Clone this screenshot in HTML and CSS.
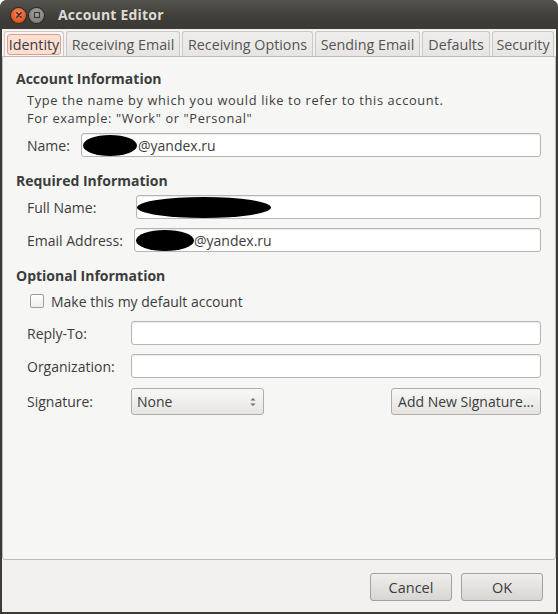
FILE: index.html
```html
<!DOCTYPE html>
<html>
<head>
<meta charset="utf-8">
<link rel="stylesheet" href="styles.css">
</head>
<body>
<div class="window">
  <div class="titlebar">
    <div class="wbtn close"><svg width="14" height="14" viewBox="0 0 14 14"><path d="M4.8 4.8 L9.2 9.2 M9.2 4.8 L4.8 9.2" stroke="#3a2a22" stroke-width="1.4" stroke-linecap="round"/></svg></div>
    <div class="wbtn mini"><svg width="14" height="14" viewBox="0 0 14 14"><rect x="4.5" y="4.5" width="5" height="5" fill="none" stroke="#3c3b37" stroke-width="1.2"/></svg></div>
    <div class="title">Account Editor</div>
  </div>
  <div class="client">
    <div class="tabs">
      <div class="tab active t1"><span>Identity</span></div>
      <div class="tab t2">Receiving Email</div>
      <div class="tab t3">Receiving Options</div>
      <div class="tab t4">Sending Email</div>
      <div class="tab t5">Defaults</div>
      <div class="tab t6">Security</div>
    </div>
    <div class="panel">
      <div class="heading h-acc">Account Information</div>
      <div class="desc">
        <div class="desc-line">Type the name by which you would like to refer to this account.</div>
        <div class="desc-line">For example: "Work" or "Personal"</div>
      </div>
      <div class="row r-name">
        <div class="label l-name">Name:</div>
        <div class="entry"><span class="blob b1"></span>@yandex.ru</div>
      </div>
      <div class="heading h-req">Required Information</div>
      <div class="row r-full">
        <div class="label l-full">Full Name:</div>
        <div class="entry e-full"><span class="blob b2"></span></div>
      </div>
      <div class="row r-email">
        <div class="label l-email">Email Address:</div>
        <div class="entry e-email"><span class="blob b3"></span>@yandex.ru</div>
      </div>
      <div class="heading h-opt">Optional Information</div>
      <div class="check-row">
        <span class="checkbox"></span><span>Make this my default account</span>
      </div>
      <div class="row r-reply">
        <div class="label l-std">Reply-To:</div>
        <div class="entry"></div>
      </div>
      <div class="row r-org">
        <div class="label l-std">Organization:</div>
        <div class="entry"></div>
      </div>
      <div class="row r-sig">
        <div class="label l-std">Signature:</div>
        <div class="select"><span>None</span><svg width="8" height="12" viewBox="0 0 8 12"><path d="M1.5 4.5 L4 2 L6.5 4.5 Z M1.5 7.5 L4 10 L6.5 7.5 Z" fill="#6a6a6a"/></svg></div>
        <div class="spacer"></div>
        <div class="button addsig">Add New Signature...</div>
      </div>
    </div>
    <div class="footer">
      <div class="button dlg">Cancel</div>
      <div class="button dlg">OK</div>
    </div>
  </div>
</div>
</body>
</html>
```
FILE: styles.css
```css
* { box-sizing: border-box; }
html, body { margin: 0; padding: 0; background: #ffffff; }
body {
  font-family: "Open Sans", "Liberation Sans", sans-serif;
  font-size: 14px;
  color: #3c3c3c;
}
.window {
  width: 558px;
  height: 614px;
  background: #3c3b37;
  border-radius: 7px 7px 0 0;
  display: flex;
  flex-direction: column;
  overflow: hidden;
}
.titlebar {
  height: 29px;
  flex: none;
  display: flex;
  align-items: center;
  background: linear-gradient(#55534d, #3f3e3a 60%, #3a3935);
  padding-left: 5px;
}
.wbtn {
  width: 15px;
  height: 15px;
  border-radius: 50%;
  display: flex;
  align-items: center;
  justify-content: center;
  margin-top: 1px;
}
.wbtn svg { display: block; }
.close {
  margin-left: 6px;
  background: radial-gradient(circle at 50% 35%, #f58a62, #e0531f 70%, #b8401a);
  box-shadow: 0 0 0 1px #2c2b28;
}
.mini {
  margin-left: 3px;
  background: radial-gradient(circle at 50% 35%, #a9a7a1, #7f7d78 75%, #62605b);
  box-shadow: 0 0 0 1px #2c2b28;
}
.title {
  margin-left: 14px;
  color: #dfdbd2;
  font-weight: bold;
  font-size: 14px;
  letter-spacing: 0.2px;
}
.client {
  flex: 1;
  margin: 0 2px 2px 2px;
  background: #f2f1f0;
  display: flex;
  flex-direction: column;
}
.tabs {
  height: 27px;
  flex: none;
  display: flex;
  align-items: flex-end;
  gap: 2px;
  padding-left: 2px;
}
.tab {
  height: 25px;
  border: 1px solid #cbc9c5;
  border-bottom: none;
  border-radius: 3px 3px 0 0;
  background: linear-gradient(#efeeec, #e6e5e2);
  color: #555555;
  font-size: 14.3px;
  display: flex;
  align-items: center;
  justify-content: center;
  white-space: nowrap;
}
.tab.active {
  background: #f6f6f5;
  border-color: #cbc9c5;
  padding: 2px 2px 2px 2px;
}
.tab.active span {
  display: flex;
  align-items: center;
  height: 21px;
  width: 100%;
  justify-content: center;
  background: #fbdfd3;
  border: 1px solid #e89c84;
  border-radius: 3px;
  color: #3c3c3c;
}
.t1 { width: 60px; }
.t2 { width: 114px; }
.t3 { width: 131px; }
.t4 { width: 105px; }
.t5 { width: 68px; }
.t6 { width: 62px; }
.panel {
  height: 504px;
  flex: none;
  background: #f6f6f5;
  border: 1px solid #bdbbb7;
  border-radius: 0 0 3px 3px;
  padding: 13px 14px 0 13px;
  display: flex;
  flex-direction: column;
}
.heading {
  font-weight: bold;
  font-size: 14px;
  line-height: 18px;
  height: 18px;
}
.h-req { margin-top: 15px; }
.h-opt { margin-top: 15px; }
.desc {
  margin-top: 4px;
  padding-left: 11px;
}
.desc-line {
  height: 17.5px;
  line-height: 17.5px;
  font-size: 12.8px;
  letter-spacing: 0.64px;
  white-space: nowrap;
}
.row {
  display: flex;
  align-items: center;
  padding-left: 11px;
}
.label {
  flex: none;
  font-size: 14px;
}
.l-name { width: 54px; }
.l-full { width: 109px; }
.l-email { width: 107px; }
.l-std { width: 104px; }
.entry {
  flex: 1;
  height: 24px;
  background: #ffffff;
  border: 1px solid #b5b4b0;
  border-radius: 3px;
  box-shadow: inset 0 1px 1px rgba(0,0,0,0.08);
  display: flex;
  align-items: center;
  padding-left: 1px;
  font-size: 14px;
}
.blob {
  display: inline-block;
  background: #000;
  border-radius: 50%;
  height: 21px;
}
.b1 { width: 54px; margin-right: 1px; }
.b2 { width: 134px; }
.b3 { width: 58px; margin-left: 0; }
.e-full { padding-left: 0; }
.e-email { padding-left: 1px; }
.r-name { margin-top: 6px; }
.r-full { margin-top: 5px; }
.r-email { margin-top: 9px; }
.check-row {
  margin-top: 7px;
  padding-left: 14px;
  height: 18px;
  display: flex;
  align-items: center;
  font-size: 14px;
}
.checkbox {
  width: 14px;
  height: 14px;
  border: 1px solid #9f9e9a;
  border-radius: 2px;
  background: linear-gradient(#ffffff, #eeeeec);
  margin-right: 7px;
}
.r-reply { margin-top: 11px; }
.r-org { margin-top: 9px; }
.r-sig { margin-top: 10px; }
.select {
  width: 133px;
  height: 27px;
  border: 1px solid #aeada9;
  border-radius: 3px;
  background: linear-gradient(#f8f8f7, #e6e5e2);
  display: flex;
  align-items: center;
  justify-content: space-between;
  padding: 0 6px 0 5px;
  font-size: 14px;
}
.select svg { display: block; }
.spacer { flex: 1; }
.button {
  height: 27px;
  border: 1px solid #aeada9;
  border-radius: 3px;
  background: linear-gradient(#f8f8f7, #e4e3e0);
  display: flex;
  align-items: center;
  justify-content: center;
  font-size: 14px;
  white-space: nowrap;
}
.addsig { width: 150px; }
.footer {
  flex: 1;
  display: flex;
  justify-content: flex-end;
  align-items: flex-start;
  gap: 9px;
  padding: 13px 13px 0 0;
}
.dlg {
  width: 82px;
  height: 28px;
  background: linear-gradient(#efeeec, #d8d6d2);
  border-color: #a3a19c;
  font-size: 14.5px;
}
```
